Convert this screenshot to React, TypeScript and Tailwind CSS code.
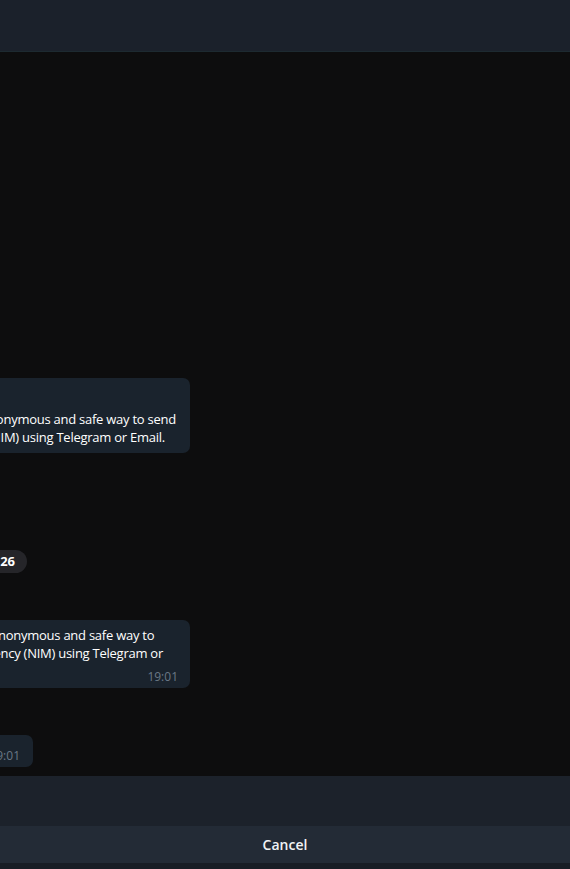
import React from 'react';

const font = { fontFamily: '"Open Sans", "Noto Sans", sans-serif' };

const Time: React.FC<{ value: string }> = ({ value }) => (
  <span className="ml-3 translate-y-[3px] text-[12px] leading-none tracking-normal text-[#6a7886]">{value}</span>
);

const App: React.FC = () => {
  return (
    <div className="flex h-[869px] w-full flex-col overflow-hidden bg-[#0d0d0e] text-white" style={font}>
      {/* Top bar */}
      <div className="h-[52px] shrink-0 border-b border-[#1d2a31] bg-[#1b212b]" />

      {/* Chat area */}
      <div className="flex flex-1 flex-col justify-end overflow-hidden bg-[#0d0d0e] pb-[9px]">
        {/* Bot description card */}
        <div className="flex w-[190px] justify-end">
          <div className="shrink-0 rounded-[7px] bg-[#1a232d] pb-[7px] pl-3 pr-[14px] pt-[7px] text-[13px] leading-[18px] tracking-[-0.25px] whitespace-nowrap">
            <div className="mb-[7px] font-semibold">What can this bot do?</div>
            <div>
              Hi! Nimiq Pay Bot is the most anonymous and safe way to send
              <br />
              and receive its cryptocurrency (NIM) using Telegram or Email.
            </div>
          </div>
        </div>

        {/* Date pill */}
        <div className="mt-[97px] flex w-[27px] justify-end">
          <div className="shrink-0 rounded-full bg-[#252529] px-3 text-[13px] leading-[23px] font-bold whitespace-nowrap">
            January 26
          </div>
        </div>

        {/* Incoming message */}
        <div className="mt-[47px] flex w-[190px] justify-end">
          <div className="shrink-0 rounded-[7px] bg-[#1a232d] pb-[8px] pl-3 pr-3 pt-[6px] text-[13px] leading-[18px] tracking-[-0.25px] whitespace-nowrap">
            <div className="pr-[15px]">
              Nimiq Pay Bot is your most anonymous and safe way to
              <br />
              send and receive cryptocurrency (NIM) using Telegram or
            </div>
            <div className="flex items-end justify-between">
              <span>Email.</span>
              <Time value="19:01" />
            </div>
          </div>
        </div>

        {/* Short message */}
        <div className="mt-[47px] flex w-[33px] justify-end">
          <div className="flex shrink-0 items-end rounded-[7px] bg-[#1a232d] pb-[8px] pl-3 pr-[13px] pt-[6px] text-[13px] leading-[18px] whitespace-nowrap">
            <span>/start</span>
            <Time value="19:01" />
          </div>
        </div>
      </div>

      {/* Bottom bar */}
      <div className="h-[50px] shrink-0 bg-[#1c222b]" />
      <button className="flex h-[37px] shrink-0 items-center justify-center bg-[#232b36] text-[14px] font-semibold text-[#f1f3f5]">
        Cancel
      </button>
      <div className="h-[6px] shrink-0 bg-[#181d25]" />
    </div>
  );
};

export default App;
